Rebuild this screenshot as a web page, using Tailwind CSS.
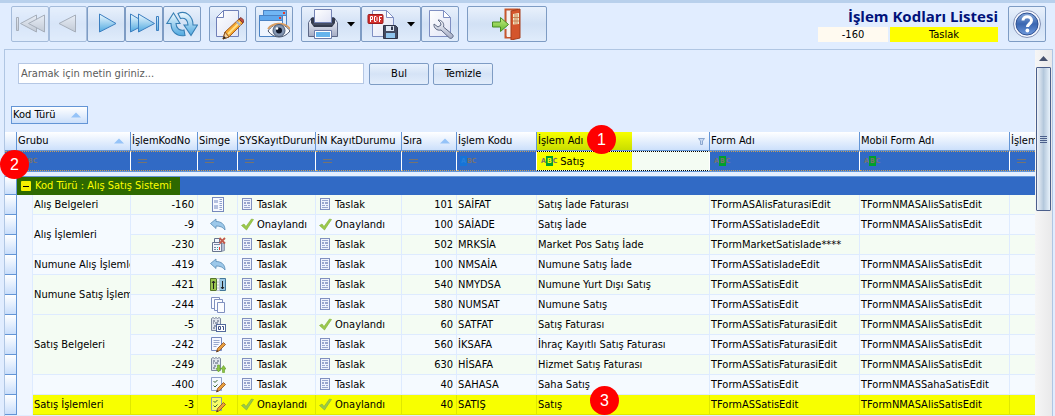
<!DOCTYPE html>
<html lang="tr">
<head>
<meta charset="utf-8">
<title>İşlem Kodları Listesi</title>
<script src="https://cdn.jsdelivr.net/npm/@tailwindcss/browser@4"></script>
</head>
<body class="flex h-screen flex-col overflow-hidden bg-[#e1edff] font-['DejaVu_Sans_Condensed','DejaVu_Sans',sans-serif] text-[11px] leading-[14px] text-black">

<svg class="absolute size-0" aria-hidden="true">
  <defs>
    <linearGradient id="blue" x1="0" y1="0" x2="0" y2="1"><stop offset="0" stop-color="#f0faff"/><stop offset="1" stop-color="#4fa9e0"/></linearGradient>
    <linearGradient id="gray" x1="0" y1="0" x2="0" y2="1"><stop offset="0" stop-color="#eceef1"/><stop offset="1" stop-color="#aeb3ba"/></linearGradient>
    <linearGradient id="paper" x1="0" y1="0" x2="1" y2="1"><stop offset="0" stop-color="#ffffff"/><stop offset="1" stop-color="#dfe3f5"/></linearGradient>
    <linearGradient id="steel" x1="0" y1="0" x2="0" y2="1"><stop offset="0" stop-color="#fafbff"/><stop offset="1" stop-color="#a3abc4"/></linearGradient>
    <linearGradient id="help" x1="0" y1="0" x2="0" y2="1"><stop offset="0" stop-color="#89abdc"/><stop offset=".5" stop-color="#3a66b1"/><stop offset="1" stop-color="#6f9add"/></linearGradient>
    <linearGradient id="leaf" x1="0" y1="0" x2="0" y2="1"><stop offset="0" stop-color="#c5ee83"/><stop offset="1" stop-color="#64b82d"/></linearGradient>
    <symbol id="note" viewBox="0 0 16 16"><rect x="2.500" y="1.500" width="9" height="11" fill="#eef2fc" stroke="#8090bf"/><path d="M4 3h6v1H4zM4 5h2v2H4zM7 5h3v2H7zM4 8h3v1H4zM8 8h2v1H8zM4 10h6v1H4z" fill="#98a5cd"/></symbol>
    <symbol id="tick" viewBox="0 0 16 16"><path d="M1.500 8.500 4 7l2 2.500L11.500 2l2 .5L6.500 13z" fill="#9bc94b" stroke="#7fae37" stroke-width=".6"/></symbol>
    <symbol id="doc" viewBox="0 0 16 16"><rect x="2.500" y=".5" width="11" height="14" fill="#f7f9ff" stroke="#7689bd"/><path d="M4 3h4v3H4zM4 8h4v4H4z" fill="#b5c1df"/><path d="M9.500 2v1H12V2zM9.500 4v1H12V4zM9.500 6v1H12V6zM9.500 8v1H12V8zM9.500 10v1H12v-1zM9.500 12v1H12v-1z" fill="#8fa0cc"/></symbol>
    <symbol id="undo" viewBox="0 0 16 16"><path d="M.5 6.500 6 2v2.500c5 0 9 2.500 9 8.500-2-3-5-4-9-4v2.500z" fill="#9cc8ea" stroke="#588bb5" stroke-width=".8"/></symbol>
    <symbol id="poscancel" viewBox="0 0 16 16"><path d="M4.500 5V1.500h5V5M2.500 5.500h9v9h-9z" fill="#f2f5fc" stroke="#66748f"/><path d="M11.500 6.500h3v7l-3 1z" fill="#b6bfd4" stroke="#66748f" stroke-width=".6"/><path d="M4 7h6v1H4zM4 10h2v1H4zM4 12h2v1H4z" fill="#7c8aa8"/><path d="M7 10h1v1H7zM7 12h1v1H7z" fill="#28b09c"/><path d="M9 10h1v3H9z" fill="#dd4136"/><path d="m9.500 1 5.500 5.500m0-5.500L9.500 6.500" stroke="#c25a4b" stroke-width="1.800"/></symbol>
    <symbol id="swap" viewBox="0 0 16 16"><path d="M.5 1.500h6v12h-6z" fill="#9bc54f" stroke="#55762c"/><path d="M9.500 1.500h6v12h-6z" fill="#9dcae5" stroke="#44779a"/><path d="M6.500 1.500h3v12h-3M7 5h2M7 8h2M7 11h2" fill="none" stroke="#bdc6d6"/><path d="M3.500 12V4M2 6l1.500-2L5 6M12.500 4v8M11 10l1.500 2 1.500-2" fill="none" stroke="#222"/></symbol>
    <symbol id="copies" viewBox="0 0 16 16"><g fill="#fbfcff" stroke="#8090bf"><path d="M1.500.5h8v11h-8z"/><path d="M4.500 2.500h8v11h-8z"/><path d="M7.500 5.500h7v10h-7z"/></g></symbol>
    <symbol id="receipt" viewBox="0 0 16 16"><path d="M1.500 1.500 3 .5l1.500 1 1.500-1 1.500 1 1.500-1 1.500 1v12h-9z" fill="#e1e6ee" stroke="#7b879f"/><path d="M3 4h2M7 4h2M3 6h1M5 6h3M4 9h2M3 11h2" stroke="#4d5a74"/></symbol>
    <symbol id="receipt01" viewBox="0 0 16 16"><use href="#receipt"/><rect x="6.500" y="7.500" width="9" height="7" fill="#fff" stroke="#536a9d"/><path d="M8.500 9.500h2v3h-2zM12 9.500h1.500V13" fill="none" stroke="#3e5287"/></symbol>
    <symbol id="receiptarrows" viewBox="0 0 16 16"><use href="#receipt"/><path d="M7.500 8h2v3.500h1.500l-2.500 3.500L6 11.500h1.500zM12.500 15.500h2V12H16l-2.500-3.500L11 12h1.500z" fill="#8cc63f" stroke="#5f9a28" stroke-width=".6"/></symbol>
    <symbol id="pen" viewBox="0 0 16 16"><path d="m6.500 15 1-3.500 6-6 2 2-6 6z" fill="#e8a03d" stroke="#8a4b20" stroke-width=".8"/><path d="m6.500 15 .6-2 1.500 1.500z" fill="#4d3a2c"/></symbol>
    <symbol id="docpen" viewBox="0 0 16 16"><path d="M1.500.5h10v13h-10z" fill="#f6f8ff" stroke="#7689bd"/><path d="M3.500 3.500h6M3.500 5.500h6M3.500 7.500h5M3.500 9.500h3" stroke="#9aa8cd"/><use href="#pen"/></symbol>
    <symbol id="checkpen" viewBox="0 0 16 16"><path d="M1.500.5h10v13h-10z" fill="#f6f8ff" fill-opacity=".4" stroke="#7689bd" stroke-opacity=".8"/><path d="m3.500 4 1.500 1.500L7.500 3M3.500 8.500 5 10l2.500-2.500" fill="none" stroke="#3e6a35"/><use href="#pen"/></symbol>
    <symbol id="eq" viewBox="0 0 10 6"><path d="M0 1.500h9M0 4.500h9" stroke="#76736f"/></symbol>
    <symbol id="up" viewBox="0 0 10 6"><path d="M0 5.500 5 .5l5 5z" fill="#95c3f8"/></symbol>
    <symbol id="down" viewBox="0 0 8 5"><path d="M0 0h8L4 4.500z"/></symbol>
  </defs>
</svg>

<header class="flex h-[49px] shrink-0 items-start border-t-[3px] border-[#b8d0ec] pt-[3px] pr-[9px] pl-[11px] [&_button]:flex [&_button]:h-9 [&_button]:w-[38px] [&_button]:items-center [&_button]:justify-center [&_button]:rounded-[2px] [&_button]:border [&_button]:border-[#7e9cc4] [&_button]:bg-linear-to-b [&_button]:from-[#e9f1fc] [&_button]:via-[#d2e1f5] [&_button]:to-[#e0ecfb]">
  <nav class="flex gap-2" aria-label="Araç çubuğu">
    <div class="flex">
      <button disabled aria-label="İlk kayıt" class="opacity-60"><svg width="32" height="32" viewBox="0 0 32 32"><g fill="url(#gray)" stroke="#7f858d"><path d="M2.500 9.500h2v13h-2zM22.500 7v17l-16-8.500z"/><path d="M30.500 7v17l-16-8.500z"/></g></svg></button>
      <button disabled aria-label="Önceki kayıt" class="opacity-60"><svg width="32" height="32" viewBox="0 0 32 32"><path d="M23.500 7v17L7 15.500z" fill="url(#gray)" stroke="#7f858d"/></svg></button>
      <button aria-label="Sonraki kayıt"><svg width="32" height="32" viewBox="0 0 32 32"><path d="M9.500 6v18L26 15.500z" fill="url(#blue)" stroke="#3c7fc0"/></svg></button>
      <button aria-label="Son kayıt"><svg width="32" height="32" viewBox="0 0 32 32"><g fill="url(#blue)" stroke="#3c7fc0"><path d="M2.500 6v18l16-8.500z"/><path d="M10.500 6v18l16-8.500zM28.500 8.500h2v14h-2z"/></g></svg></button>
      <button aria-label="Yenile"><svg width="32" height="32" viewBox="0 0 32 32"><g fill="url(#blue)" stroke="#377fb4" stroke-width="1.100"><path d="M.8 15.500 7.500 5l6.500 10.500h-4c0 5 4 7.500 8 6.500l1 5.500C10 29 5 23 5 15.500z"/><path d="M31.500 17 25 27.500 18 17h4c0-5-3-7.500-7.500-6.500L12 5.500C20 2 27 8 27 17z"/></g></svg></button>
    </div>
    <button aria-label="Düzenle"><svg width="32" height="32" viewBox="0 0 32 32"><path d="M11.500 2.500h15v26h-22v-19z" fill="url(#paper)" stroke="#7080b8"/><path d="M11.500 2.500v7h-7z" fill="#fff" stroke="#7080b8"/><path d="m11 31 2-7L27 11l4 4-14 14z" fill="#f4a62d" stroke="#a55c20"/><path d="m16 26 12-12" stroke="#ffe18a" stroke-width="2"/><path d="m27 11 2-1.500 3 3L31 15z" fill="#c44b3d" stroke="#7c3a34"/><path d="m24.500 13.500 4 4" stroke="#a9b4c4" stroke-width="2"/><path d="m13 24-2 7 6-2z" fill="#f6d4a2" stroke="#89552a"/><path d="m11 31 1-3 2 2z" fill="#222"/></svg></button>
    <button aria-label="Önizleme"><svg width="32" height="32" viewBox="0 0 32 32"><g stroke="#4b83c4"><path d="M5.500 2.500h23v20h-23z" fill="#dceafd"/><path d="M5.500 2.500h23v5h-23z" fill="#71b6f4"/><path d="M1.500 7.500h23v21h-23z" fill="#eef5ff"/><path d="M1.500 7.500h23v5h-23z" fill="#5ea7ed"/></g><path d="M25 4h2v2h-2zM21 9h2v2h-2z" fill="#e03b2c"/><path d="M10 23c6-9 16-9 22 0-6 8-16 8-22 0z" fill="#fafcff" stroke="#46536b"/><path d="M10 21c4-6 16-8 22 0" fill="none" stroke="#d99d61" stroke-width="1.800"/><circle cx="21" cy="22.500" r="6" fill="#8496b1" stroke="#495a75"/><circle cx="21" cy="22.500" r="3" fill="#10182a"/><circle cx="19" cy="20.500" r="1.300" fill="#fff"/></svg></button>
    <div class="flex">
      <button aria-label="Yazdır" class="!w-[60px] gap-2"><svg width="32" height="32" viewBox="0 0 32 32"><path d="M1.500 14.500 5 9.500h22l3.500 5v14h-29z" fill="url(#steel)" stroke="#5c6785"/><path d="M4 10h24v5l-3 4H7l-3-4z" fill="#343b4d"/><path d="M7.500 1.500h17v13h-17z" fill="url(#paper)" stroke="#7382b4"/><path d="M6 16h20" stroke="#59637a"/><path d="M7.500 22.500h17v8h-17z" fill="#fff" stroke="#6c7ba8"/><path d="M9 24h14v5H9z" fill="#66b4ec"/></svg><svg width="8" height="5"><use href="#down"/></svg></button>
      <button aria-label="PDF olarak kaydet" class="!w-[60px] gap-2"><svg width="32" height="32" viewBox="0 0 32 32"><path d="M5.500 2.500h14l7 7v19h-21z" fill="url(#paper)" stroke="#7f8fc2"/><path d="M19.500 2.500v7h7z" fill="#fff" stroke="#7f8fc2"/><rect x="1" y="6.500" width="15" height="9" rx="1" fill="#d3302e" stroke="#9c1b1b"/><path d="M3.500 14V8.500h2v3h-2M7.500 8.500h1.500l1 1v3l-1 1H7.500zM12.500 14V8.500H15M12.500 11.500H14" fill="none" stroke="#fff"/><path d="M16.500 17.500h12l2 2v11h-14z" fill="#434b62" stroke="#2e3448"/><path d="M19 18h8v5h-8z" fill="#dfe8f6"/><path d="M24 18.500h2v3.500h-2z" fill="#333b50"/><path d="M19 25h9v5h-9z" fill="#8fc4ed"/></svg><svg width="8" height="5"><use href="#down"/></svg></button>
      <button aria-label="Ayarlar"><svg width="32" height="32" viewBox="0 0 32 32"><path d="M5.500 2.500h14l7 7v19h-21z" fill="url(#paper)" stroke="#7f8fc2"/><path d="M19.500 2.500v7h7z" fill="#fff" stroke="#7f8fc2"/><path d="M14 12c4 0 6.500 3.500 5.500 7l9 7.500c2 2-1 5-3 3.500L17 22c-4 1-7.500-2-7-6l4 3 3-2-.5-2.500z" fill="url(#steel)" stroke="#5d6883"/></svg></button>
    </div>
    <button aria-label="Çıkış" class="!w-20"><svg width="32" height="32" viewBox="0 0 32 32"><path d="M14.500 15V1.500h13M14.500 21v8.500H20" fill="none" stroke="#c8572c" stroke-width="2"/><path d="M16 3h4v26h-4z" fill="#f6f1ee"/><path d="m20 3 9-2v29l-9 2z" fill="#d4552c" stroke="#a63f1c"/><path d="m22 6 6-1v11l-6 .5z" fill="#f3e7c5"/><path d="M24 6v10M26 6v10M22 9.500h6M22 13h6" stroke="#c68155"/><path d="M1.500 14h8v-4.500l8 7-8 7V19h-8z" fill="url(#leaf)" stroke="#478b25"/></svg></button>
  </nav>
  <div class="ml-auto w-[180px] shrink-0">
    <h1 class="text-right font-['Open_Sans','Noto_Sans',sans-serif] text-[15px] leading-[21px] font-bold whitespace-nowrap text-[#00127a]">İşlem Kodları Listesi</h1>
    <div class="flex gap-[2px] text-center leading-[15px]">
      <output class="w-[70px] bg-[#fffaf0]">-160</output>
      <output class="flex-1 bg-[#ffff00]">Taslak</output>
    </div>
  </div>
  <div class="ml-[10px] shrink-0"><button aria-label="Yardım"><svg width="32" height="32" viewBox="0 0 32 32"><circle cx="16" cy="16" r="13.500" fill="#f6f8ff" stroke="#8291b5"/><circle cx="16" cy="16" r="11" fill="url(#help)" stroke="#2f5192"/><path d="M12 12.500c0-5 8.500-5 8.500 0 0 3-4 3.500-4 6.500" fill="none" stroke="#fff" stroke-width="3"/><circle cx="16.400" cy="22.500" r="1.900" fill="#fff"/></svg></button></div>
</header>

<main class="relative mr-[2px] ml-1 flex min-h-0 flex-1 border-x border-t border-[#b0c6e3]">
  <div class="flex min-w-0 flex-1 flex-col overflow-hidden">
    <form class="flex gap-1 pt-[13px] pl-[13px]">
      <input type="search" aria-label="Arama metni" placeholder="Aramak için metin giriniz..." class="mr-px h-[21px] w-[346px] border border-[#b5c7e4] bg-white pl-[2px] placeholder:text-[#5a5a5a]">
      <button type="button" class="h-[22px] w-[60px] rounded-[2px] border border-[#7e9cc4] bg-linear-to-b from-[#eaf2fd] via-[#d5e3f6] to-[#e2edfb]">Bul</button>
      <button type="button" class="h-[22px] w-[60px] rounded-[2px] border border-[#7e9cc4] bg-linear-to-b from-[#eaf2fd] via-[#d5e3f6] to-[#e2edfb]">Temizle</button>
    </form>
    <div class="pt-[21px] pb-2 pl-[6px]">
      <button class="flex h-[18px] w-[77px] items-center justify-between border border-[#6395d6] bg-linear-to-b from-white to-[#cbdffa] pr-[6px] pl-px">Kod Türü <svg width="10" height="6"><use href="#up"/></svg></button>
    </div>

    <table class="w-full table-fixed border-separate border-spacing-0 whitespace-nowrap [&_td]:overflow-hidden [&_td]:p-0 [&_th]:overflow-hidden [&_th]:p-0">
      <colgroup><col class="w-3"><col class="w-4"><col class="w-[98px]"><col class="w-[67px]"><col class="w-10"><col class="w-[78px]"><col class="w-[86px]"><col class="w-[55px]"><col class="w-20"><col class="w-[173px]"><col class="w-[150px]"><col class="w-[150px]"><col></colgroup>
      <thead>
        <tr class="h-[19px] bg-linear-to-b from-white to-[#c9defb] text-left [&>th]:border-r [&>th]:border-b [&>th]:border-[#6395d6] [&>th]:pl-px [&>th]:font-normal">
          <th aria-label="Seçim"></th>
          <th colspan="2"><div class="flex items-center justify-between pr-[6px]">Grubu <svg width="10" height="6"><use href="#up"/></svg></div></th>
          <th>İşlemKodNo</th><th>Simge</th><th>SYSKayıtDurum</th><th>İN KayıtDurumu</th>
          <th><div class="flex items-center justify-between pr-[6px]">Sıra <svg width="10" height="6"><use href="#up"/></svg></div></th>
          <th>İşlem Kodu</th>
          <th class="bg-linear-to-b from-[#f8ff00] to-[#c9de00] bg-[length:95px_100%] bg-no-repeat"><div class="flex items-center justify-between pr-1">İşlem Adı <svg width="7" height="8"><path d="M.5 1.500h6L4.500 4v3.500h-2V4z" fill="#c9daf2" stroke="#8ba7cf"/></svg></div></th>
          <th>Form Adı</th><th>Mobil Form Adı</th><th class="!border-r-0">İşlem</th>
        </tr>
        <tr class="h-5 text-[7px] font-bold text-[#76736f] [&_svg]:ml-[7px] [&>td]:border-y [&>td]:border-r [&>td]:border-y-[#c9a05a] [&>td]:border-r-white [&>td]:bg-[#316ac5] [&>td]:[border-bottom-style:dotted] [&>td]:[border-top-style:dotted]">
          <td></td><td colspan="2"><span class="pl-[6px]">ABC</span></td>
          <td><svg width="10" height="6"><use href="#eq"/></svg></td><td><svg width="10" height="6"><use href="#eq"/></svg></td><td><svg width="10" height="6"><use href="#eq"/></svg></td><td><svg width="10" height="6"><use href="#eq"/></svg></td><td><svg width="10" height="6"><use href="#eq"/></svg></td>
          <td><span class="ml-[3px] inline-block bg-[#1574d8] px-px leading-[10px] text-[#2a80d8]">A</span>BC</td>
          <td class="!border-y-black !bg-[#f4fcf3] bg-linear-to-b from-[#f8ff00] to-[#f8ff00] bg-[length:95px_100%] bg-no-repeat"><label class="flex items-center pl-1">A<span class="bg-[#00a02c] px-px leading-[10px] text-[#f8ff00]">B</span>C<input aria-label="İşlem Adı filtresi" value="Satış" class="ml-[3px] h-4 w-24 bg-transparent text-[11px] font-normal text-black"></label></td>
          <td><span class="pl-1">A</span><span class="inline-block bg-[#00a02c] px-px leading-[10px]">B</span>C</td>
          <td><span class="pl-1">A</span><span class="inline-block bg-[#00a02c] px-px leading-[10px]">B</span>C</td>
          <td class="!border-r-0"><svg width="10" height="6"><use href="#eq"/></svg></td>
        </tr>
      </thead>
      <tbody>
        <tr class="h-[6px]"><td colspan="13" class="border-y border-[#6395d6] bg-[#e4efff]"></td></tr>
        <tr class="h-[18px]">
          <td class="border-r border-b border-[#6395d6] bg-linear-to-b from-white to-[#c9defb]"></td>
          <td colspan="12" class="bg-[#316ac5] text-[#ffff00]"><div class="flex h-[18px] w-[163px] items-center gap-1 bg-[#2d6900] pl-1"><button aria-label="Grubu daralt" class="flex size-[10px] shrink-0 items-center justify-center rounded-[1px] bg-[#f4f000]"><span class="h-px w-[6px] bg-black"></span></button>Kod Türü : Alış Satış Sistemi</div></td>
        </tr>
      </tbody>
      <tbody class="[&_svg]:inline-block [&_svg]:align-middle [&_td]:border-r [&_td]:border-b [&_td]:border-[#deebff] [&_td]:pl-px [&_td:nth-last-child(-n+1)]:border-r-0 [&_tr]:h-5 [&_tr]:bg-[#f5faff] [&_tr:nth-child(odd)]:bg-[#f4fcf3] [&_td.num]:pr-[3px] [&_td.num]:text-right [&_td.ico]:text-center [&_td.st]:pl-[2px] [&_td.st_svg]:mr-px [&_td.sel]:!border-[#6395d6] [&_td.sel]:!border-r [&_td.sel]:bg-linear-to-b [&_td.sel]:from-white [&_td.sel]:to-[#c9defb]">
        <tr><td class="sel"></td><td rowspan="11" class="bg-[#f0f6ff] !border-b-0"></td><td>Alış Belgeleri</td><td class="num">-160</td><td class="ico"><svg width="16" height="16"><use href="#doc"/></svg></td><td class="st"><svg width="16" height="16"><use href="#note"/></svg>Taslak</td><td class="st"><svg width="16" height="16"><use href="#note"/></svg>Taslak</td><td class="num">101</td><td>SAİFAT</td><td>Satış İade Faturası</td><td>TFormASAlisFaturasiEdit</td><td>TFormNMASAlisSatisEdit</td><td></td></tr>
        <tr><td class="sel"></td><td rowspan="2">Alış İşlemleri</td><td class="num">-9</td><td class="ico"><svg width="16" height="16"><use href="#undo"/></svg></td><td class="st"><svg width="16" height="16"><use href="#tick"/></svg>Onaylandı</td><td class="st"><svg width="16" height="16"><use href="#tick"/></svg>Onaylandı</td><td class="num">100</td><td>SAİADE</td><td>Satış İade</td><td>TFormASSatisIadeEdit</td><td>TFormNMASAlisSatisEdit</td><td></td></tr>
        <tr><td class="sel"></td><td class="num">-230</td><td class="ico"><svg width="16" height="16"><use href="#poscancel"/></svg></td><td class="st"><svg width="16" height="16"><use href="#note"/></svg>Taslak</td><td class="st"><svg width="16" height="16"><use href="#note"/></svg>Taslak</td><td class="num">502</td><td>MRKSİA</td><td>Market Pos Satış İade</td><td>TFormMarketSatisIade****</td><td></td><td></td></tr>
        <tr><td class="sel"></td><td>Numune Alış İşlemle</td><td class="num">-419</td><td class="ico"><svg width="16" height="16"><use href="#undo"/></svg></td><td class="st"><svg width="16" height="16"><use href="#note"/></svg>Taslak</td><td class="st"><svg width="16" height="16"><use href="#note"/></svg>Taslak</td><td class="num">100</td><td>NMSAİA</td><td>Numune Satış İade</td><td>TFormASSatisIadeEdit</td><td>TFormNMASAlisSatisEdit</td><td></td></tr>
        <tr><td class="sel"></td><td rowspan="2">Numune Satış İşlem</td><td class="num">-421</td><td class="ico"><svg width="16" height="16"><use href="#swap"/></svg></td><td class="st"><svg width="16" height="16"><use href="#note"/></svg>Taslak</td><td class="st"><svg width="16" height="16"><use href="#note"/></svg>Taslak</td><td class="num">540</td><td>NMYDSA</td><td>Numune Yurt Dışı Satış</td><td>TFormASSatisEdit</td><td>TFormNMASAlisSatisEdit</td><td></td></tr>
        <tr><td class="sel"></td><td class="num">-244</td><td class="ico"><svg width="16" height="16"><use href="#copies"/></svg></td><td class="st"><svg width="16" height="16"><use href="#note"/></svg>Taslak</td><td class="st"><svg width="16" height="16"><use href="#note"/></svg>Taslak</td><td class="num">580</td><td>NUMSAT</td><td>Numune Satış</td><td>TFormASSatisEdit</td><td>TFormNMASAlisSatisEdit</td><td></td></tr>
        <tr><td class="sel"></td><td rowspan="3">Satış Belgeleri</td><td class="num">-5</td><td class="ico"><svg width="16" height="16"><use href="#receipt01"/></svg></td><td class="st"><svg width="16" height="16"><use href="#note"/></svg>Taslak</td><td class="st"><svg width="16" height="16"><use href="#tick"/></svg>Onaylandı</td><td class="num">60</td><td>SATFAT</td><td>Satış Faturası</td><td>TFormASSatisFaturasiEdit</td><td>TFormNMASAlisSatisEdit</td><td></td></tr>
        <tr><td class="sel"></td><td class="num">-242</td><td class="ico"><svg width="16" height="16"><use href="#docpen"/></svg></td><td class="st"><svg width="16" height="16"><use href="#note"/></svg>Taslak</td><td class="st"><svg width="16" height="16"><use href="#note"/></svg>Taslak</td><td class="num">560</td><td>İKSAFA</td><td>İhraç Kayıtlı Satış Faturası</td><td>TFormASSatisFaturasiEdit</td><td>TFormNMASAlisSatisEdit</td><td></td></tr>
        <tr><td class="sel"></td><td class="num">-249</td><td class="ico"><svg width="16" height="16"><use href="#receiptarrows"/></svg></td><td class="st"><svg width="16" height="16"><use href="#note"/></svg>Taslak</td><td class="st"><svg width="16" height="16"><use href="#note"/></svg>Taslak</td><td class="num">630</td><td>HİSAFA</td><td>Hizmet Satış Faturası</td><td>TFormASSatisFaturasiEdit</td><td>TFormNMASAlisSatisEdit</td><td></td></tr>
        <tr><td class="sel"></td><td></td><td class="num">-400</td><td class="ico"><svg width="16" height="16"><use href="#checkpen"/></svg></td><td class="st"><svg width="16" height="16"><use href="#note"/></svg>Taslak</td><td class="st"><svg width="16" height="16"><use href="#note"/></svg>Taslak</td><td class="num">40</td><td>SAHASA</td><td>Saha Satış</td><td>TFormASSatisEdit</td><td>TFormNMASSahaSatisEdit</td><td></td></tr>
        <tr class="!bg-[#f8ff00] [&>td:not(.sel)]:!border-[#dfe800]"><td class="sel"></td><td>Satış İşlemleri</td><td class="num">-3</td><td class="ico"><svg width="16" height="16"><use href="#checkpen"/></svg></td><td class="st"><svg width="16" height="16"><use href="#tick"/></svg>Onaylandı</td><td class="st"><svg width="16" height="16"><use href="#tick"/></svg>Onaylandı</td><td class="num">40</td><td>SATIŞ</td><td>Satış</td><td>TFormASSatisEdit</td><td>TFormNMASAlisSatisEdit</td><td></td></tr>
      </tbody>
    </table>
  </div>

  <div class="flex w-[17px] shrink-0 flex-col bg-linear-to-r from-[#f6f6f6] to-[#e9e9ea] pr-px pl-px" aria-hidden="true">
    <div class="flex h-[17px] items-center justify-center"><svg width="9" height="5"><path d="M0 5 4.500 0 9 5z" fill="#45516e"/></svg></div>
    <div class="flex h-36 flex-col items-center justify-center gap-px rounded-[1px] border border-[#4b5f8b] bg-linear-to-r from-[#eff3f9] via-[#b4c8dc] to-[#e8f2fb] [&>i]:h-px [&>i]:w-[7px] [&>i]:bg-[#4b5f8b]"><i></i><i></i><i></i><i></i></div>
  </div>

  <span class="absolute top-[75px] left-[582px] flex size-[29px] items-center justify-center rounded-full bg-[#ff0000] font-['Liberation_Sans',sans-serif] text-base text-white">1</span>
  <span class="absolute top-[100px] -left-[5px] flex size-[29px] items-center justify-center rounded-full bg-[#ff0000] font-['Liberation_Sans',sans-serif] text-base text-white">2</span>
  <span class="absolute top-[336px] left-[585px] flex size-[29px] items-center justify-center rounded-full bg-[#ff0000] font-['Liberation_Sans',sans-serif] text-base text-white">3</span>
</main>
</body>
</html>
